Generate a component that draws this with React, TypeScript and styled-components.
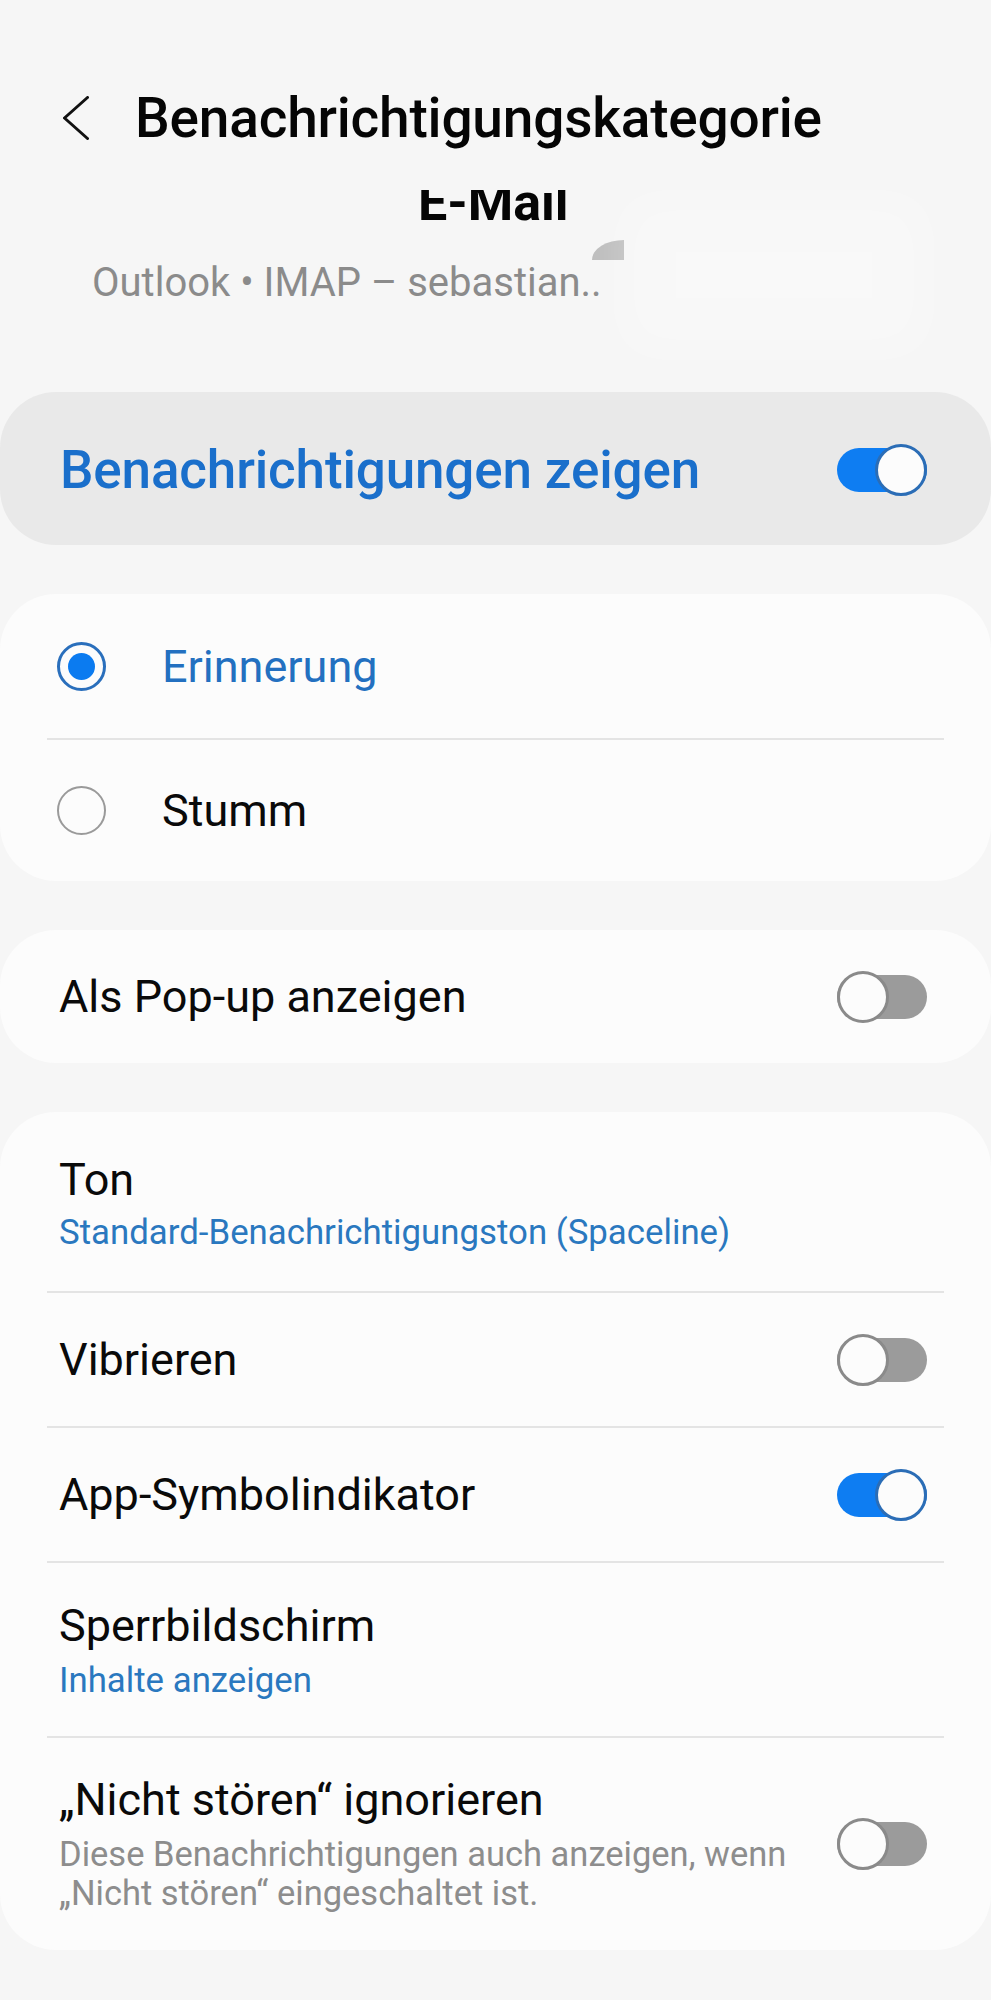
import styled, { createGlobalStyle } from "styled-components";

const GlobalStyle = createGlobalStyle`
  html, body {
    margin: 0;
    padding: 0;
    background: #f6f6f6;
  }
  body {
    font-family: Roboto, "Noto Sans", "Liberation Sans", sans-serif;
    color: #0a0a0a;
  }
  * {
    box-sizing: border-box;
  }
`;

const Page = styled.div`
  width: 991px;
  min-height: 2000px;
  background: #f6f6f6;
  display: flex;
  flex-direction: column;
`;

const Header = styled.header`
  position: relative;
  display: flex;
  flex-direction: column;
`;

const TitleBar = styled.div`
  height: 100px;
  margin-top: 68px;
  padding-left: 63px;
  display: flex;
  align-items: center;
  gap: 46px;
`;

const BackButton = styled.button`
  border: 0;
  padding: 0;
  background: none;
  width: 26px;
  height: 44px;
  display: flex;
  color: #111;
`;

const Title = styled.h1`
  margin: 0;
  font-size: 55px;
  line-height: 55px;
  font-weight: 500;
  letter-spacing: -0.2px;
  color: #050505;
`;

/* app name scrolled partly under the title bar */
const AppNameClip = styled.div`
  margin-top: 22px;
  height: 33px;
  overflow: hidden;
  padding-left: 418px;
`;

const AppName = styled.div`
  margin-top: -13px;
  font-size: 52px;
  line-height: 52px;
  font-weight: 700;
  color: #050505;
`;

const AppSub = styled.div`
  margin-top: 40px;
  padding-left: 92px;
  font-size: 40px;
  line-height: 40px;
  color: #8b8b8b;
  white-space: nowrap;
`;

const Smudge = styled.span`
  position: absolute;
  left: 592px;
  top: 240px;
  width: 32px;
  height: 20px;
  background: #bdbdbd;
  border-top-left-radius: 32px 20px;
`;

const Redaction = styled.span`
  position: absolute;
  left: 624px;
  top: 200px;
  width: 300px;
  height: 150px;
  background: rgba(255, 255, 255, 0.3);
  filter: blur(24px);
`;

const Cards = styled.div`
  margin-top: 89px;
  display: flex;
  flex-direction: column;
  gap: 49px;
`;

const Card = styled.section<{ $tint?: boolean }>`
  background: ${({ $tint }) => ($tint ? "#e9e9e9" : "#fcfcfc")};
  border-radius: 56px;
  display: flex;
  flex-direction: column;
`;

const MasterRow = styled.div`
  height: 153px;
  padding: 2px 64px 0 60px;
  display: flex;
  align-items: center;
  justify-content: space-between;
`;

const MasterLabel = styled.span`
  font-size: 53px;
  font-weight: 500;
  color: #1a6fcb;
  letter-spacing: -0.15px;
`;

const RadioRow = styled.div<{ $h: number }>`
  height: ${({ $h }) => $h}px;
  padding-left: 57px;
  display: flex;
  align-items: center;
  gap: 56px;
`;

const RadioCircle = styled.span<{ $checked: boolean }>`
  width: 49px;
  height: 49px;
  border-radius: 50%;
  border: ${({ $checked }) =>
    $checked ? "3px solid #2a6fbc" : "2.5px solid #9a9a9a"};
  background: #fcfcfc;
  display: flex;
  align-items: center;
  justify-content: center;
  flex-shrink: 0;

  &::after {
    content: "";
    display: ${({ $checked }) => ($checked ? "block" : "none")};
    width: 27px;
    height: 27px;
    border-radius: 50%;
    background: #0b7bf0;
  }
`;

const RadioLabel = styled.span<{ $checked: boolean }>`
  font-size: 45px;
  color: ${({ $checked }) => ($checked ? "#2370c0" : "#0a0a0a")};
`;

const Divider = styled.hr`
  margin: 0 47px;
  border: 0;
  height: 2px;
  background: #e4e4e4;
`;

const Row = styled.div<{ $h?: number; $pt?: number; $pb?: number }>`
  ${({ $h }) => ($h ? `height: ${$h}px;` : "")}
  padding: ${({ $pt = 0 }) => $pt}px 64px ${({ $pb = 0 }) => $pb}px 59px;
  display: flex;
  align-items: center;
  gap: 30px;
`;

const TextCol = styled.div<{ $gap: number }>`
  flex: 1;
  display: flex;
  flex-direction: column;
  gap: ${({ $gap }) => $gap}px;
`;

const Label = styled.span`
  font-size: 45px;
  line-height: 52px;
  color: #0a0a0a;
`;

const Value = styled.span`
  font-size: 34.8px;
  line-height: 44px;
  color: #2a78bf;
`;

const Description = styled.span`
  font-size: 34.5px;
  line-height: 39px;
  color: #8d8d8d;
`;

const Track = styled.span<{ $on: boolean }>`
  width: 90px;
  height: 44px;
  border-radius: 22px;
  flex-shrink: 0;
  background: ${({ $on }) => ($on ? "#0e7df2" : "#9b9b9b")};
  display: flex;
  align-items: center;
  justify-content: ${({ $on }) => ($on ? "flex-end" : "flex-start")};
`;

const Thumb = styled.span<{ $on: boolean }>`
  width: 52px;
  height: 52px;
  border-radius: 50%;
  flex-shrink: 0;
  background: #fcfcfc;
  border: 3px solid ${({ $on }) => ($on ? "#2b6db6" : "#8a8a8a")};
`;

const Toggle = ({ on }: { on: boolean }) => (
  <Track $on={on}>
    <Thumb $on={on} />
  </Track>
);

const Chevron = () => (
  <svg width="26" height="44" viewBox="0 0 26 44" fill="none">
    <polyline
      points="24.5,1.5 1.5,22 24.5,42.5"
      stroke="currentColor"
      strokeWidth="3"
      strokeLinecap="round"
      strokeLinejoin="round"
    />
  </svg>
);

export default function App() {
  return (
    <Page>
      <GlobalStyle />
      <Header>
        <TitleBar>
          <BackButton aria-label="Zurück">
            <Chevron />
          </BackButton>
          <Title>Benachrichtigungskategorie</Title>
        </TitleBar>
        <AppNameClip>
          <AppName>E-Mail</AppName>
        </AppNameClip>
        <AppSub>Outlook • IMAP – sebastian..</AppSub>
        <Smudge />
        <Redaction />
      </Header>

      <Cards>
        <Card $tint>
          <MasterRow>
            <MasterLabel>Benachrichtigungen zeigen</MasterLabel>
            <Toggle on />
          </MasterRow>
        </Card>

        <Card>
          <RadioRow $h={144}>
            <RadioCircle $checked />
            <RadioLabel $checked>Erinnerung</RadioLabel>
          </RadioRow>
          <Divider />
          <RadioRow $h={141}>
            <RadioCircle $checked={false} />
            <RadioLabel $checked={false}>Stumm</RadioLabel>
          </RadioRow>
        </Card>

        <Card>
          <Row $h={133}>
            <TextCol $gap={0}>
              <Label>Als Pop-up anzeigen</Label>
            </TextCol>
            <Toggle on={false} />
          </Row>
        </Card>

        <Card>
          <Row $pt={42} $pb={37}>
            <TextCol $gap={4}>
              <Label>Ton</Label>
              <Value>Standard-Benachrichtigungston (Spaceline)</Value>
            </TextCol>
          </Row>
          <Divider />
          <Row $h={133}>
            <TextCol $gap={0}>
              <Label>Vibrieren</Label>
            </TextCol>
            <Toggle on={false} />
          </Row>
          <Divider />
          <Row $h={133}>
            <TextCol $gap={0}>
              <Label>App-Symbolindikator</Label>
            </TextCol>
            <Toggle on />
          </Row>
          <Divider />
          <Row $pt={37} $pb={34}>
            <TextCol $gap={6}>
              <Label>Sperrbildschirm</Label>
              <Value>Inhalte anzeigen</Value>
            </TextCol>
          </Row>
          <Divider />
          <Row $pt={36} $pb={37}>
            <TextCol $gap={9}>
              <Label>„Nicht stören“ ignorieren</Label>
              <Description>
                Diese Benachrichtigungen auch anzeigen, wenn „Nicht stören“
                eingeschaltet ist.
              </Description>
            </TextCol>
            <Toggle on={false} />
          </Row>
        </Card>
      </Cards>
    </Page>
  );
}
